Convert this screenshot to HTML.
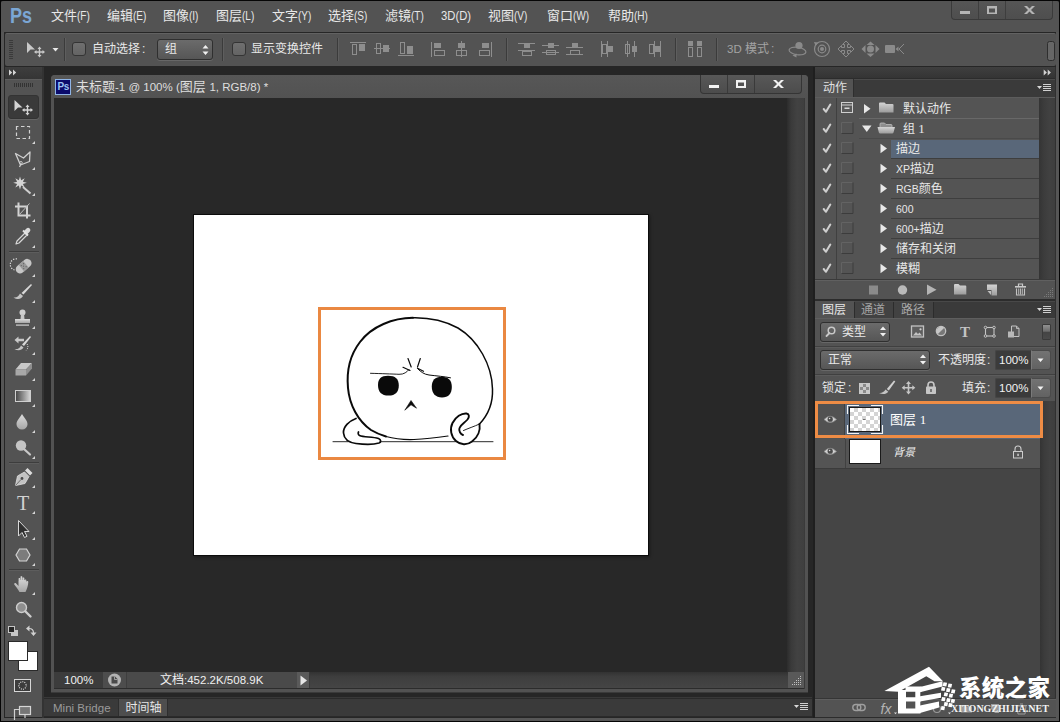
<!DOCTYPE html>
<html lang="zh-CN">
<head>
<meta charset="utf-8">
<title>未标题-1 @ 100% (图层 1, RGB/8) * - Photoshop</title>
<style>
*{box-sizing:border-box;margin:0;padding:0}
html,body{width:1060px;height:722px;overflow:hidden;background:#000}
body{font-family:"Liberation Sans","Noto Sans CJK SC",sans-serif;font-size:13px;color:#e8e8e8;position:relative}
.a{position:absolute}
.t{position:absolute;white-space:nowrap;line-height:16px;height:16px;font-size:13px}
.l{font-size:11.5px}
.m{display:inline-block;font-size:12.5px;transform:scaleX(.8);transform-origin:0 50%}
.k{font-size:10.5px}
svg{position:absolute;left:0;top:0;overflow:visible}
#app{position:absolute;left:0;top:0;width:1060px;height:722px;background:#262626;overflow:hidden}
.sep{position:absolute;width:2px;top:38px;height:23px;border-left:1px solid #3b3b3b;border-right:1px solid #5e5e5e}
.cb{position:absolute;width:14px;height:14px;top:42px;border:1px solid #343434;border-radius:3px;background:linear-gradient(#6f6f6f,#646464)}
.sel{position:absolute;border:1px solid #2f2f2f;border-radius:3px;background:linear-gradient(#6b6b6b,#565656);box-shadow:0 1px 0 rgba(255,255,255,.12)}
.num{position:absolute;background:#3b3b3b;border:1px solid #454545;border-right:0;border-radius:2px 0 0 2px}
.dd{position:absolute;border:1px solid #4a4a4a;border-left-color:#7a7a7a;border-radius:0 3px 3px 0;background:linear-gradient(#737373,#626262)}
.row{position:absolute;left:815px;width:224px;height:20px}
.rl{position:absolute;height:1px;background:#3e3e3e}
</style>
</head>
<body>
<div id="app">

<!-- ===== MENU BAR ===== -->
<div class="a" style="left:1px;top:1px;width:1058px;height:720px;background:#565656;border-radius:3px 3px 0 0"></div><div class="a" style="left:4px;top:32px;width:1052px;height:686px;background:#262626"></div><div class="a" style="left:1px;top:1px;width:1058px;height:31px;background:#535353;border-radius:3px 3px 0 0"></div>
<div class="t" style="left:10px;top:4px;height:24px;line-height:24px;font-size:22px;font-weight:bold;color:#7ba6d4;letter-spacing:0;transform:scaleX(.82);transform-origin:0 0">Ps</div>
<div class="t" style="left:51px;top:8px">文件<span class="m">(F)</span></div>
<div class="t" style="left:107px;top:8px">编辑<span class="m">(E)</span></div>
<div class="t" style="left:163px;top:8px">图像<span class="m">(I)</span></div>
<div class="t" style="left:216px;top:8px">图层<span class="m">(L)</span></div>
<div class="t" style="left:272px;top:8px">文字<span class="m">(Y)</span></div>
<div class="t" style="left:328px;top:8px">选择<span class="m">(S)</span></div>
<div class="t" style="left:385px;top:8px">滤镜<span class="m">(T)</span></div>
<div class="t" style="left:441px;top:8px"><span class="m" style="transform:scaleX(.9)">3D(D)</span></div>
<div class="t" style="left:488px;top:8px">视图<span class="m">(V)</span></div>
<div class="t" style="left:547px;top:8px">窗口<span class="m">(W)</span></div>
<div class="t" style="left:608px;top:8px">帮助<span class="m">(H)</span></div>
<!-- app window buttons -->
<div class="a" style="left:951px;top:0;width:102px;height:20px;border:1px solid #3a3a3a;border-top:0;border-radius:0 0 4px 4px;background:linear-gradient(#565656,#4e4e4e)"></div>
<div class="a" style="left:978px;top:0;width:1px;height:19px;background:#3e3e3e"></div>
<div class="a" style="left:1005px;top:0;width:1px;height:19px;background:#3e3e3e"></div>

<!-- ===== OPTIONS BAR ===== -->
<div class="a" style="left:5px;top:33px;width:1051px;height:33px;background:#535353;border-top:1px solid #626262;border-radius:2px"></div>
<div class="sep" style="left:64px"></div>
<div class="cb" style="left:72px"></div>
<div class="t" style="left:92px;top:41px;font-size:12px">自动选择<span style="margin-left:2px">:</span></div>
<div class="sel" style="left:157px;top:39px;width:56px;height:21px"></div>
<div class="t" style="left:165px;top:41px;font-size:12px">组</div>
<div class="sep" style="left:222px"></div>
<div class="cb" style="left:232px"></div>
<div class="t" style="left:251px;top:41px;font-size:12px">显示变换控件</div>
<div class="sep" style="left:337px"></div>
<div class="sep" style="left:506px"></div>
<div class="sep" style="left:675px"></div>
<div class="sep" style="left:716px"></div>
<div class="t" style="left:727px;top:41px;color:#a3a3a3;font-size:12px"><span class="l" style="font-size:11.5px">3D</span> 模式<span style="margin-left:2px">:</span></div>

<!-- ===== TOOLBAR ===== -->
<div class="a" style="left:5px;top:79px;width:37px;height:638px;background:#535353;border-top:1px solid #5e5e5e"></div>
<div class="a" style="left:5px;top:67px;width:37px;height:12px;background:linear-gradient(#3e3e3e,#353535)"></div>
<div class="a" style="left:42px;top:67px;width:2px;height:651px;background:#333"></div>
<div class="a" style="left:8px;top:95px;width:31px;height:24px;border-radius:3px;background:#3a3a3a;border:1px solid #333;box-shadow:0 1px 0 rgba(255,255,255,.1)"></div>
<div class="a" style="left:9px;top:251px;width:30px;height:2px;border-top:1px solid #3d3d3d;border-bottom:1px solid #5d5d5d"></div>
<div class="a" style="left:9px;top:462px;width:30px;height:2px;border-top:1px solid #3d3d3d;border-bottom:1px solid #5d5d5d"></div>
<div class="a" style="left:9px;top:569px;width:30px;height:2px;border-top:1px solid #3d3d3d;border-bottom:1px solid #5d5d5d"></div>
<div class="a" style="left:8px;top:641px;width:20px;height:20px;background:#fff;border:1px solid #2a2a2a;z-index:2"></div>
<div class="a" style="left:18px;top:651px;width:20px;height:20px;background:#fff;border:1px solid #2a2a2a"></div>

<!-- ===== DOCUMENT WINDOW ===== -->
<div class="a" style="left:51px;top:75px;width:757px;height:618px;background:#525252;border-radius:4px 4px 0 0;border-bottom:1px solid #3a3a3a"></div>
<div class="a" style="left:51px;top:75px;width:757px;height:23px;background:linear-gradient(#575757,#525252);border-radius:4px 4px 0 0"></div>
<div class="a" style="left:54px;top:98px;width:734px;height:574px;background:#282828"></div>
<div class="a" style="left:787px;top:98px;width:17px;height:574px;background:linear-gradient(90deg,#2c2c2c,#3a3a3a 25%,#424242 60%,#3f3f3f)"></div><div class="a" style="left:804px;top:98px;width:1px;height:591px;background:#3a3a3a"></div>
<div class="a" style="left:54px;top:672px;width:734px;height:16px;background:linear-gradient(#323232,#3e3e3e 30%,#454545)"></div><div class="a" style="left:54px;top:688px;width:750px;height:1px;background:#2c2c2c"></div>
<div class="a" style="left:788px;top:672px;width:16px;height:16px;background:#595959"></div>
<div class="a" style="left:55px;top:79px;width:16px;height:16px;background:#0b0b6b;border:1px solid #8fb4e6"></div>
<div class="t" style="left:57.5px;top:80px;height:14px;line-height:14px;font-size:10px;font-weight:bold;color:#9cc2f2;letter-spacing:-0.3px">Ps</div>
<div class="t" style="left:76px;top:79px;color:#dedede">未标题<span class="l">-1 @ 100% (</span>图层 <span class="l">1, RGB/8) *</span></div>
<div class="a" style="left:700px;top:75px;width:102px;height:19px;border:1px solid #353535;border-top:0;border-radius:0 0 4px 4px;background:linear-gradient(#585858,#4c4c4c)"></div>
<div class="a" style="left:727px;top:75px;width:1px;height:18px;background:#3a3a3a"></div>
<div class="a" style="left:754px;top:75px;width:1px;height:18px;background:#3a3a3a"></div>
<!-- status bar -->
<div class="a" style="left:54px;top:672px;width:49px;height:16px;background:#3c3c3c"></div>
<div class="t" style="left:64px;top:672px;font-size:11.5px;color:#f0f0f0">100%</div>
<div class="a" style="left:103px;top:672px;width:23px;height:16px;background:#4d4d4d"></div>
<div class="a" style="left:126px;top:672px;width:171px;height:16px;background:#4a4a4a;border-left:1px solid #3e3e3e"></div><div class="a" style="left:297px;top:672px;width:13px;height:16px;background:#5a5a5a;border-right:1px solid #3a3a3a"></div>
<div class="t" style="left:160px;top:672px;font-size:12px;color:#f0f0f0">文档<span class="l">:452.2K/508.9K</span></div>
<!-- paper -->
<div class="a" style="left:194px;top:215px;width:454px;height:340px;background:#fff;box-shadow:0 0 0 1px #0c0c0c,1px 1px 3px 1px rgba(0,0,0,.35)"></div>
<div class="a" style="left:318px;top:307px;width:188px;height:153px;border:3px solid #ea8841"></div>

<!-- ===== BOTTOM TABS ===== -->
<div class="a" style="left:44px;top:697px;width:768px;height:1px;background:#383838"></div><div class="a" style="left:44px;top:698px;width:768px;height:19px;background:#3a3a3a;border-top:1px solid #2a2a2a;border-bottom:1px solid #2a2a2a"></div>
<div class="a" style="left:118px;top:699px;width:50px;height:17px;background:#4e4e4e;border-left:1px solid #2e2e2e;border-right:1px solid #2e2e2e"></div>
<div class="t" style="left:53px;top:700px;font-size:11.5px;color:#9a9a9a">Mini Bridge</div>
<div class="t" style="left:125.5px;top:700px;font-size:12px;color:#e6e6e6">时间轴</div>
<div class="a" style="left:0;top:721px;width:1060px;height:1px;background:#050505"></div>
<div class="a" style="left:0;top:0;width:1px;height:722px;background:#050505"></div>
<div class="a" style="left:0;top:0;width:1060px;height:1px;background:#050505"></div>
<div class="a" style="left:1059px;top:0;width:1px;height:722px;background:#050505"></div>

<!-- ===== RIGHT DOCK ===== -->
<!--DOCK-START-->
<div class="a" style="left:813px;top:67px;width:2px;height:651px;background:#1f1f1f"></div>
<div class="a" style="left:815px;top:67px;width:241px;height:650px;background:#535353"></div>
<!-- collapse header -->
<div class="a" style="left:815px;top:67px;width:241px;height:12px;background:linear-gradient(#3f3f3f,#343434);border-bottom:1px solid #2c2c2c"></div>
<!-- actions tab bar -->
<div class="a" style="left:815px;top:79px;width:241px;height:18px;background:#3a3a3a;border-top:1px solid #4a4a4a"></div>
<div class="a" style="left:815px;top:79px;width:39px;height:19px;background:#535353;border-right:1px solid #2e2e2e"></div>
<div class="t" style="left:823px;top:80px;font-size:12px;color:#e0e0e0">动作</div>
<div class="a" style="left:815px;top:97px;width:241px;height:1px;background:#5c5c5c"></div>
<!-- actions list -->
<div class="a" style="left:815px;top:98px;width:224px;height:181px;background:#545454"></div>
<div class="a" style="left:1039px;top:98px;width:16px;height:181px;background:linear-gradient(90deg,#343434,#3c3c3c 30%,#414141 65%,#3e3e3e)"></div>
<div class="a" style="left:836px;top:98px;width:1px;height:181px;background:#404040"></div>
<div class="a" style="left:891px;top:140px;width:148px;height:18px;background:#596779"></div>
<div class="rl" style="left:859px;top:118px;width:180px;background:#686868"></div>
<div class="rl" style="left:859px;top:138px;width:180px;background:#4a4a4a"></div>
<div class="rl" style="left:891px;top:158px;width:148px"></div>
<div class="rl" style="left:891px;top:178px;width:148px"></div>
<div class="rl" style="left:891px;top:198px;width:148px"></div>
<div class="rl" style="left:891px;top:218px;width:148px"></div>
<div class="rl" style="left:891px;top:238px;width:148px"></div>
<div class="rl" style="left:891px;top:258px;width:148px"></div>
<div class="t" style="left:903px;top:101px;font-size:12px">默认动作</div>
<div class="t" style="left:903px;top:121px;font-size:12px">组 <span class="l" style="font-family:'Liberation Serif',serif;font-size:13px">1</span></div>
<div class="t" style="left:896px;top:141px;font-size:12px">描边</div>
<div class="t" style="left:896px;top:161px;font-size:12px"><span class="k">XP</span>描边</div>
<div class="t" style="left:896px;top:181px;font-size:12px"><span class="k">RGB</span>颜色</div>
<div class="t" style="left:896px;top:201px;font-size:12px"><span class="k">600</span></div>
<div class="t" style="left:896px;top:221px;font-size:12px"><span class="k">600+</span>描边</div>
<div class="t" style="left:896px;top:241px;font-size:12px">储存和关闭</div>
<div class="t" style="left:896px;top:261px;font-size:12px">模糊</div>
<!-- actions footer -->
<div class="a" style="left:815px;top:279px;width:241px;height:1px;background:#3a3a3a"></div>
<div class="a" style="left:815px;top:280px;width:241px;height:19px;background:#535353;border-top:1px solid #606060"></div>
<div class="a" style="left:815px;top:299px;width:241px;height:2px;background:#2c2c2c"></div>
<!-- layers tab bar -->
<div class="a" style="left:815px;top:301px;width:241px;height:17px;background:#3a3a3a;border-top:1px solid #484848"></div>
<div class="a" style="left:815px;top:301px;width:39px;height:18px;background:#535353"></div>
<div class="a" style="left:855px;top:302px;width:78px;height:16px;background:#424242"></div><div class="a" style="left:854px;top:302px;width:1px;height:16px;background:#2c2c2c"></div>
<div class="a" style="left:893px;top:302px;width:1px;height:16px;background:#2c2c2c"></div>
<div class="a" style="left:933px;top:302px;width:1px;height:16px;background:#2c2c2c"></div>
<div class="t" style="left:822px;top:302px;font-size:12px;color:#e6e6e6">图层</div>
<div class="t" style="left:861px;top:302px;font-size:12px;color:#a4a4a4">通道</div>
<div class="t" style="left:901px;top:302px;font-size:12px;color:#a8a8a8">路径</div>
<div class="a" style="left:815px;top:318px;width:241px;height:1px;background:#5e5e5e"></div>
<!-- filter row -->
<div class="sel" style="left:820px;top:322px;width:70px;height:20px"></div>
<div class="t" style="left:842px;top:324px;font-size:12px">类型</div>
<div class="a" style="left:1042px;top:324px;width:9px;height:16px;border:1px solid #3a3a3a;border-radius:1px;background:linear-gradient(#909090 0,#6c6c6c 45%,#444 50%,#4a4a4a 100%)"></div>
<div class="a" style="left:815px;top:346px;width:241px;height:2px;border-top:1px solid #404040;border-bottom:1px solid #5c5c5c"></div>
<!-- blend row -->
<div class="sel" style="left:820px;top:350px;width:110px;height:20px"></div>
<div class="t" style="left:828px;top:352px;font-size:12px">正常</div>
<div class="t" style="left:938px;top:352px;font-size:12px">不透明度<span style="margin-left:1px">:</span></div>
<div class="num" style="left:995px;top:350px;width:36px;height:20px"></div>
<div class="dd" style="left:1031px;top:350px;width:20px;height:20px"></div>
<div class="t" style="left:999px;top:352px;font-size:11.5px;color:#f2f2f2">100%</div>
<div class="a" style="left:815px;top:374px;width:241px;height:2px;border-top:1px solid #404040;border-bottom:1px solid #5c5c5c"></div>
<!-- lock row -->
<div class="t" style="left:822px;top:380px;font-size:12px">锁定<span style="margin-left:2px">:</span></div>
<div class="t" style="left:962px;top:380px;font-size:12px">填充<span style="margin-left:1px">:</span></div>
<div class="num" style="left:995px;top:378px;width:36px;height:20px"></div>
<div class="dd" style="left:1031px;top:378px;width:20px;height:20px"></div>
<div class="t" style="left:999px;top:380px;font-size:11.5px;color:#f2f2f2">100%</div>
<!-- layers list -->
<div class="a" style="left:815px;top:401px;width:225px;height:297px;background:#454545"></div>
<div class="a" style="left:1040px;top:401px;width:15px;height:297px;background:linear-gradient(90deg,#343434,#3c3c3c 30%,#414141 65%,#3e3e3e)"></div><div class="a" style="left:1055px;top:67px;width:1px;height:651px;background:#303030"></div>
<div class="a" style="left:815px;top:401px;width:225px;height:38px;background:#596779"></div>
<div class="a" style="left:815px;top:401px;width:30px;height:38px;background:#525252;border-right:1px solid #404040"></div>
<div class="a" style="left:815px;top:439px;width:225px;height:29px;background:#545454"></div>
<div class="a" style="left:845px;top:439px;width:1px;height:29px;background:#414141"></div>
<div class="a" style="left:815px;top:468px;width:225px;height:1px;background:#3b3b3b"></div>
<!-- layer 1 thumb -->
<div class="a" style="left:849px;top:407px;width:32px;height:25px;border:1px solid #1a1a1a;background-color:#fff;background-image:linear-gradient(45deg,#d4d4d4 25%,transparent 25%,transparent 75%,#d4d4d4 75%),linear-gradient(45deg,#d4d4d4 25%,transparent 25%,transparent 75%,#d4d4d4 75%);background-size:8px 8px;background-position:0 0,4px 4px"></div>
<div class="a" style="left:849px;top:439px;width:32px;height:25px;border:1px solid #1a1a1a;background:#fff"></div>
<div class="t" style="left:890px;top:412px;color:#fff">图层 <span style="font-family:'Liberation Serif',serif;font-size:13px">1</span></div>
<div class="t" style="left:893px;top:444px;font-size:11px;font-style:italic;color:#f0f0f0">背景</div>
<div class="a" style="left:815px;top:401px;width:228px;height:37px;border:3px solid #ee8c45"></div>
<!-- layers footer -->
<div class="a" style="left:815px;top:698px;width:241px;height:1px;background:#353535"></div>
<div class="a" style="left:815px;top:699px;width:241px;height:18px;background:#535353;border-top:1px solid #5e5e5e"></div>
<div class="a" style="left:815px;top:717px;width:241px;height:1px;background:#2c2c2c"></div>
<!--DOCK-END-->

<!-- ===== ICONS ===== -->
<!--ICONS1-START-->
<svg width="1060" height="722" viewBox="0 0 1060 722">
<defs>
<linearGradient id="gi" x1="0" y1="0" x2="0" y2="1"><stop offset="0" stop-color="#d8d8d8"/><stop offset="1" stop-color="#a8a8a8"/></linearGradient>
<linearGradient id="gh" x1="0" y1="0" x2="1" y2="0"><stop offset="0" stop-color="#3c3c3c"/><stop offset="1" stop-color="#e0e0e0"/></linearGradient>
</defs>
<!-- app window buttons -->
<g fill="#b4b4b4">
<rect x="960" y="11" width="10" height="3"/>
<path d="M987 6h10v8h-10zM989 8.500v4h6v-4z" fill-rule="evenodd"/>
<path d="M1024 6h3l2.500 2.600 2.500-2.600h3l-4 4 4 4h-3l-2.500-2.600-2.500 2.600h-3l4-4z"/>
</g>
<!-- doc window buttons -->
<g fill="#f2f2f2">
<rect x="709" y="85" width="10" height="3"/>
<path d="M736 80h10v8h-10zM738 82.500v3.500h6v-3.500z" fill-rule="evenodd"/>
<path d="M773 80h3l2.500 2.600 2.500-2.600h3l-4 4 4 4h-3l-2.500-2.600-2.500 2.600h-3l4-4z"/>
</g>
<!-- options bar grip -->
<g fill="#3a3a3a">
<rect x="9" y="40" width="4" height="1"/><rect x="9" y="42" width="4" height="1"/><rect x="9" y="44" width="4" height="1"/><rect x="9" y="46" width="4" height="1"/><rect x="9" y="48" width="4" height="1"/><rect x="9" y="50" width="4" height="1"/><rect x="9" y="52" width="4" height="1"/><rect x="9" y="54" width="4" height="1"/><rect x="9" y="56" width="4" height="1"/><rect x="9" y="58" width="4" height="1"/>
</g>
<!-- options bar right grip -->
<rect x="1047.500" y="41.500" width="7" height="19" rx="2" fill="#666" stroke="#2e2e2e"/>
<!-- move tool (options) -->
<g id="mv">
<path d="M27 42l8 7.500h-4.500l-3.500 3.500z" fill="#c9c9c9"/>
<path d="M39.500 46.500l2 2.500h-1.300v2.300h2.300v-1.300l2.500 2-2.500 2v-1.300h-2.300v2.300h1.300l-2 2.500-2-2.500h1.300v-2.300h-2.300v1.300l-2.500-2 2.500-2v1.300h2.300v-2.300h-1.300z" fill="#c9c9c9"/>
</g>
<path d="M52.500 48h6l-3 3.500z" fill="#e8e8e8"/>
<!-- select arrows -->
<path d="M202.500 48.500l3-3.500 3 3.500zM202.500 51.500l3 3.500 3-3.500z" fill="#f0f0f0"/>
<!-- align icons -->
<g fill="#8e8e8e" stroke="none">
<rect x="350" y="42" width="16" height="1"/><path d="M352 44h5v11h-5zM353 45v9h3v-9z" fill-rule="evenodd"/><rect x="359" y="44" width="6" height="7"/>
<rect x="374" y="48" width="16" height="1"/><path d="M376 43h5v11h-5zM377 44v9h3v-9z" fill-rule="evenodd"/><rect x="383" y="45" width="6" height="7"/>
<rect x="398" y="55" width="16" height="1"/><path d="M400 42h5v12h-5zM401 43v10h3v-10z" fill-rule="evenodd"/><rect x="407" y="46" width="6" height="8"/>
<rect x="431" y="42" width="1" height="15"/><rect x="434" y="43" width="7" height="5"/><path d="M434 50h11v6h-11zM435 51v4h9v-4z" fill-rule="evenodd"/>
<rect x="461" y="41" width="1" height="16"/><rect x="458" y="43" width="7" height="5"/><path d="M456 50h11v6h-11zM457 51v4h9v-4z" fill-rule="evenodd"/>
<rect x="491" y="42" width="1" height="15"/><rect x="482" y="43" width="7" height="5"/><path d="M479 50h11v6h-11zM480 51v4h9v-4z" fill-rule="evenodd"/>
<rect x="518" y="43" width="17" height="1"/><rect x="518" y="50" width="17" height="1"/><rect x="524" y="44" width="6" height="4"/><path d="M522 51h10v5h-10zM523 52v3h8v-3z" fill-rule="evenodd"/>
<rect x="542" y="45" width="17" height="1"/><rect x="542" y="52" width="17" height="1"/><rect x="548" y="43" width="6" height="5"/><path d="M546 50h10v5h-10zM547 51v3h8v-3z" fill-rule="evenodd"/>
<rect x="566" y="47" width="17" height="1"/><rect x="566" y="54" width="17" height="1"/><rect x="572" y="43" width="6" height="4"/><path d="M570 50h10v4h-10zM571 51v3h8v-3z" fill-rule="evenodd"/>
<rect x="601" y="41" width="1" height="16"/><rect x="607" y="41" width="1" height="16"/><path d="M602 44h5v10h-5zM603 45v8h3v-8z" fill-rule="evenodd"/><rect x="608" y="46" width="5" height="6"/>
<rect x="627" y="41" width="1" height="16"/><rect x="634" y="41" width="1" height="16"/><path d="M625 44h5v10h-5zM626 45v8h3v-8z" fill-rule="evenodd"/><rect x="632" y="46" width="5" height="6"/>
<rect x="654" y="41" width="1" height="16"/><rect x="660" y="41" width="1" height="16"/><path d="M649 44h5v10h-5zM650 45v8h3v-8z" fill-rule="evenodd"/><rect x="655" y="46" width="5" height="6"/>
<rect x="688" y="41" width="5" height="5"/><rect x="697" y="41" width="5" height="5"/><path d="M688 47h5v10h-5zM689 48v8h3v-8z" fill-rule="evenodd"/><path d="M697 47h5v10h-5zM698 48v8h3v-8z" fill-rule="evenodd"/>
</g>
<!-- 3D mode icons -->
<g fill="none" stroke="#8a8a8a" stroke-width="1.200">
<ellipse cx="797.500" cy="51" rx="8.500" ry="3.800" transform="rotate(8 797.500 51)"/>
<circle cx="799" cy="45.500" r="3.600" fill="#8a8a8a" stroke="none"/>
<path d="M792.500 55.500l4-2v4z" fill="#8a8a8a" stroke="none"/>
<circle cx="822" cy="49" r="7.500"/>
<circle cx="822" cy="49" r="3.800"/>
<circle cx="822" cy="49" r="2" fill="#8a8a8a" stroke="none"/>
<path d="M814 42l4.500 .5-3 3.500z" fill="#8a8a8a" stroke="none"/>
<path d="M846 41L849.500 44.500H847.500V47.500H850.500V45.500L854 49L850.500 52.500V50.500H847.500V53.500H849.500L846 57L842.500 53.500H844.500V50.500H841.500V52.500L838 49L841.500 45.500V47.500H844.500V44.500H842.500Z" stroke-width="1"/>
</g>
<g fill="#8a8a8a">
<circle cx="870.500" cy="49" r="3.500"/>
<path d="M870.500 41.500l4 3.500h-8zM870.500 57l-4-3.500h8zM861.500 49l4-4v8zM879.500 49l-4 4v-8z"/>
<rect x="885" y="45" width="10" height="8" rx="1"/>
<path d="M895.500 49l3-2.500v5z"/>
<path d="M904 44l-5 5 5 5" fill="none" stroke="#8a8a8a" stroke-width="1"/>
</g>
</svg>
<!--ICONS1-END-->
<!--ICONS2-START-->
<svg width="1060" height="722" viewBox="0 0 1060 722">
<defs><linearGradient id="tg" x1="0" y1="0" x2="0" y2="1"><stop offset="0" stop-color="#dcdcdc"/><stop offset="1" stop-color="#a6a6a6"/></linearGradient><linearGradient id="tgr" x1="0" y1="0" x2="1" y2="0"><stop offset="0" stop-color="#444"/><stop offset="1" stop-color="#d8d8d8"/></linearGradient></defs>
<path d="M9 69.500l3.200 3-3.200 3zM13 69.500l3.200 3-3.200 3z" fill="#d4d4d4"/>
<path d="M1043.700 69.500l3.200 3-3.200 3zM1047.700 69.500l3.200 3-3.200 3z" fill="#d4d4d4"/>
<g fill="#333"><rect x="14" y="83" width="1" height="4"/><rect x="16" y="83" width="1" height="4"/><rect x="18" y="83" width="1" height="4"/><rect x="20" y="83" width="1" height="4"/><rect x="22" y="83" width="1" height="4"/><rect x="24" y="83" width="1" height="4"/><rect x="26" y="83" width="1" height="4"/><rect x="28" y="83" width="1" height="4"/><rect x="30" y="83" width="1" height="4"/><rect x="32" y="83" width="1" height="4"/></g>
<g fill="#d6d6d6"><path d="M35 141.0v3h-3z"/><path d="M35 167.0v3h-3z"/><path d="M35 193.0v3h-3z"/><path d="M35 219.0v3h-3z"/><path d="M35 245.0v3h-3z"/><path d="M35 274.0v3h-3z"/><path d="M35 300.0v3h-3z"/><path d="M35 326.0v3h-3z"/><path d="M35 352.0v3h-3z"/><path d="M35 378.0v3h-3z"/><path d="M35 404.0v3h-3z"/><path d="M35 430.0v3h-3z"/><path d="M35 456.0v3h-3z"/><path d="M35 485.0v3h-3z"/><path d="M35 511.0v3h-3z"/><path d="M35 537.0v3h-3z"/><path d="M35 563.0v3h-3z"/><path d="M35 592.0v3h-3z"/></g>
<path d="M14.500 100l8 7.500h-4.500l-3.500 3.500z" fill="#d4d4d4"/>
<path d="M27.500 104.500l2 2.500h-1.300v2.300h2.300v-1.300l2.500 2-2.500 2v-1.300h-2.300v2.300h1.300l-2 2.500-2-2.500h1.300v-2.300h-2.300v1.300l-2.500-2 2.500-2v1.300h2.300v-2.300h-1.300z" fill="#d4d4d4"/>
<rect x="16.500" y="126.500" width="13" height="12" fill="none" stroke="#d2d2d2" stroke-width="1.200" stroke-dasharray="3.500 2.500" stroke-dashoffset="1.500"/>
<path d="M15.500 153.500l8 4.500 6.500-6-.5 9.500-9 3.500zM21 164l-1.500 3" fill="none" stroke="#cfcfcf" stroke-width="1.300" stroke-linejoin="round"/><circle cx="21" cy="162.800" r="1.300" fill="none" stroke="#cfcfcf" stroke-width=".9"/>
<path d="M23 187l7.500 6.500" stroke="#cfcfcf" stroke-width="2" fill="none"/><path d="M20 176.500l1.200 3.800 3.500-2-1.800 3.500 3.900 1-3.900 1.200 1.700 3.500-3.400-1.900-1.200 3.900-1.200-3.900-3.500 1.900 1.800-3.500-3.900-1.200 3.900-1-1.800-3.500 3.500 2z" fill="#d4d4d4"/>
<path d="M18.500 202.500v13h12M15 206.500h12v12" fill="none" stroke="#d2d2d2" stroke-width="2"/><path d="M19.500 214.500l10-11" stroke="#bdbdbd" stroke-width="1" fill="none"/>
<path d="M16 244l1-3 8-8 2 2-8 8z" fill="none" stroke="#d6d6d6" stroke-width="1.200" stroke-linejoin="round"/><path d="M24 231l2.500-2.500a2.200 2.200 0 0 1 3.200 3.200L27 234.500z" fill="#dadada"/><path d="M23 230.500l5 5" stroke="#e2e2e2" stroke-width="1.800"/>
<g transform="rotate(-40 23.500 266)"><rect x="14.500" y="262" width="18" height="8.500" rx="4.200" fill="#c6c6c6"/><rect x="20.500" y="262" width="6" height="8.500" fill="#9a9a9a"/><g fill="#606060"><circle cx="22" cy="264.300" r=".6"/><circle cx="25" cy="264.300" r=".6"/><circle cx="22" cy="268.200" r=".6"/><circle cx="25" cy="268.200" r=".6"/><circle cx="23.500" cy="266.200" r=".6"/></g></g><path d="M14.500 270a5.500 5.500 0 0 1 3-11" fill="none" stroke="#e0e0e0" stroke-width="1.200" stroke-dasharray="1.200 1.400"/>
<path d="M31 284l1 1-8.500 9.500-2-1.500z" fill="#d8d8d8"/><path d="M13.500 297.500c3 .5 5-1 6.500-4l3 2.500c-2 3.500-5.500 4-9.500 1.500z" fill="#c4c4c4"/>
<circle cx="22.500" cy="312.500" r="3" fill="#d0d0d0"/><path d="M21 314h3l.5 5h-4z" fill="#c8c8c8"/><rect x="15" y="319" width="15" height="4" fill="url(#tg)"/><rect x="16" y="324.500" width="13" height="1.200" fill="#d0d0d0"/>
<path d="M30 336l1 1-7 9-2-1.500z" fill="#d8d8d8"/><path d="M14.500 349c3 .5 5-.5 6.500-3.500l2.500 2c-2 3-5.500 3.500-9 1.500z" fill="#c4c4c4"/><path d="M14.500 340l4-3.500v2.300h5.500v2.400h-5.500v2.300z" fill="#c8c8c8"/><path d="M27 344c1.500 2 1 4.500-.8 6.500" fill="none" stroke="#dcdcdc" stroke-width="1" stroke-dasharray="1 1.200"/>
<path d="M21 363h11l-6 6.500h-10.500z" fill="#c8c8c8"/><path d="M15.500 369.500h10.500v6h-10.500z" fill="#a8a8a8"/><path d="M26 369.500l6-6.500v5.500l-6 7z" fill="#8e8e8e"/>
<rect x="15.500" y="390.500" width="15" height="11" fill="url(#tgr)" stroke="#cfcfcf" stroke-width="1"/>
<path d="M22 414c1.800 3.500 5.500 6.500 5.500 10.200a5.500 5.200 0 0 1-11 0c0-3.700 3.700-6.700 5.500-10.200z" fill="url(#tg)"/>
<circle cx="21" cy="445.500" r="5.200" fill="#c4c4c4"/><path d="M24.500 449.500l5.500 5" stroke="#c8c8c8" stroke-width="2.200" stroke-linecap="round"/>
<path d="M15.500 485.500l2-9.500 7-4 4.500 4.500-4 7z" fill="#c2c2c2" stroke="#e0e0e0" stroke-width=".8" stroke-linejoin="round"/><path d="M25 470.500l2.500-2.500 5 5-2.500 2.500z" fill="#dcdcdc"/><circle cx="22" cy="478.500" r="1.400" fill="#4a4a4a"/><path d="M15.500 485.500l5.500-6" stroke="#5a5a5a" stroke-width=".8"/>
<text x="23" y="509.500" text-anchor="middle" font-family="'Liberation Serif',serif" font-size="20" fill="#d2d2d2">T</text>
<path d="M18.500 520.500v15.500l3.500-3.500 2.500 5 2.500-1.200-2.500-4.800h4.500z" fill="#303030" stroke="#d8d8d8" stroke-width="1" stroke-linejoin="round"/>
<path d="M16 555l3.500-6h7l3.500 6-3.500 6h-7z" fill="#7c7c7c" stroke="#d4d4d4" stroke-width="1.200"/>
<path d="M19.500 592c-1.500-2.500-3.500-5.500-5.200-7.500-.6-1 .6-2 1.600-1.200l2.600 2.800v-7c0-1.300 1.900-1.300 1.900 0v-1.800c0-1.400 2-1.400 2 0v1.300c0-1.400 2-1.400 2 0v2c0-1.300 1.900-1.300 1.900 0v1.200c.3-1.300 2.100-1.200 2 .3-.2 4-1.300 7-2.800 9.900z" fill="url(#tg)"/><path d="M18.500 581v-2.500M20.400 580v-3M22.400 580v-3M24.400 580v-2.200M26.300 581v-1.500" stroke="#777" stroke-width=".5"/>
<circle cx="21.500" cy="607.500" r="5" fill="#8f8f8f" stroke="#cdcdcd" stroke-width="1.400"/><path d="M25.500 611.500l5 5" stroke="#cdcdcd" stroke-width="2.400" stroke-linecap="round"/>
<rect x="11.500" y="630.500" width="6" height="5" fill="#c6c6c6" stroke="#c6c6c6"/><rect x="8.500" y="626.500" width="6" height="6" fill="#262626" stroke="#c4c4c4"/>
<path d="M29 628.500c3 0 4.500 1.500 4.500 4.500" fill="none" stroke="#d0d0d0" stroke-width="1.200"/><path d="M26 628.500l3.500-3v6zM33.500 636l-3-3.500h6z" fill="#d0d0d0"/>
<rect x="14.500" y="679.500" width="16" height="12" fill="#3c3c3c" stroke="#d6d6d6"/><circle cx="22.500" cy="685.500" r="3.700" fill="none" stroke="#e2e2e2" stroke-width="1.100" stroke-dasharray="1 1.100"/>
<path d="M14.500 720v-10.500h5" fill="none" stroke="#cfcfcf" stroke-width="1.200"/><rect x="19.500" y="706.500" width="11" height="8" fill="#767676" stroke="#d6d6d6" stroke-width="1.200"/><path d="M25 715v3" stroke="#d0d0d0" stroke-width="1.200"/>
</svg>
<!--ICONS2-END-->
<!--ICONS3-START-->
<svg width="1060" height="722" viewBox="0 0 1060 722">
<defs><linearGradient id="dg" x1="0" y1="0" x2="0" y2="1"><stop offset="0" stop-color="#d4d4d4"/><stop offset="1" stop-color="#9c9c9c"/></linearGradient></defs>
<path d="M1037 86h5l-2.500 3z" fill="#d8d8d8"/><rect x="1043" y="84" width="8" height="1" fill="#d0d0d0"/><rect x="1043" y="86" width="8" height="1" fill="#d0d0d0"/><rect x="1043" y="88" width="8" height="1" fill="#d0d0d0"/><rect x="1043" y="90" width="8" height="1" fill="#d0d0d0"/>
<path d="M1037 308h5l-2.500 3z" fill="#d8d8d8"/><rect x="1043" y="306" width="8" height="1" fill="#d0d0d0"/><rect x="1043" y="308" width="8" height="1" fill="#d0d0d0"/><rect x="1043" y="310" width="8" height="1" fill="#d0d0d0"/><rect x="1043" y="312" width="8" height="1" fill="#d0d0d0"/>
<path d="M794 705h5l-2.500 3z" fill="#d8d8d8"/><rect x="800" y="703" width="8" height="1" fill="#d0d0d0"/><rect x="800" y="705" width="8" height="1" fill="#d0d0d0"/><rect x="800" y="707" width="8" height="1" fill="#d0d0d0"/><rect x="800" y="709" width="8" height="1" fill="#d0d0d0"/>
<path d="M823.700 109l2.300 2.800 4.300-7.300" fill="none" stroke="#cfcfcf" stroke-width="2" stroke-linecap="round" stroke-linejoin="round"/>
<path d="M823.700 129l2.300 2.800 4.300-7.300" fill="none" stroke="#cfcfcf" stroke-width="2" stroke-linecap="round" stroke-linejoin="round"/>
<path d="M823.700 149l2.300 2.800 4.300-7.300" fill="none" stroke="#cfcfcf" stroke-width="2" stroke-linecap="round" stroke-linejoin="round"/>
<path d="M823.700 169l2.300 2.800 4.300-7.300" fill="none" stroke="#cfcfcf" stroke-width="2" stroke-linecap="round" stroke-linejoin="round"/>
<path d="M823.700 189l2.300 2.800 4.300-7.300" fill="none" stroke="#cfcfcf" stroke-width="2" stroke-linecap="round" stroke-linejoin="round"/>
<path d="M823.700 209l2.300 2.800 4.300-7.300" fill="none" stroke="#cfcfcf" stroke-width="2" stroke-linecap="round" stroke-linejoin="round"/>
<path d="M823.700 229l2.300 2.800 4.300-7.300" fill="none" stroke="#cfcfcf" stroke-width="2" stroke-linecap="round" stroke-linejoin="round"/>
<path d="M823.700 249l2.300 2.800 4.300-7.300" fill="none" stroke="#cfcfcf" stroke-width="2" stroke-linecap="round" stroke-linejoin="round"/>
<path d="M823.700 269l2.300 2.800 4.300-7.300" fill="none" stroke="#cfcfcf" stroke-width="2" stroke-linecap="round" stroke-linejoin="round"/>
<rect x="841.500" y="102.500" width="11" height="10" fill="#5a5a5a" stroke="#cfcfcf"/><rect x="842" y="104.500" width="10" height="1" fill="#cfcfcf"/><rect x="844.500" y="107.500" width="5" height="1.500" fill="#d8d8d8"/>
<path d="M841.500 133.5v-11h11" fill="none" stroke="#636363"/><path d="M841.500 133.5h11.500v-11" fill="none" stroke="#3c3c3c"/>
<path d="M841.500 153.5v-11h11" fill="none" stroke="#636363"/><path d="M841.500 153.5h11.500v-11" fill="none" stroke="#3c3c3c"/>
<path d="M841.500 173.5v-11h11" fill="none" stroke="#636363"/><path d="M841.500 173.5h11.500v-11" fill="none" stroke="#3c3c3c"/>
<path d="M841.500 193.5v-11h11" fill="none" stroke="#636363"/><path d="M841.500 193.5h11.500v-11" fill="none" stroke="#3c3c3c"/>
<path d="M841.500 213.5v-11h11" fill="none" stroke="#636363"/><path d="M841.500 213.5h11.500v-11" fill="none" stroke="#3c3c3c"/>
<path d="M841.500 233.5v-11h11" fill="none" stroke="#636363"/><path d="M841.500 233.5h11.500v-11" fill="none" stroke="#3c3c3c"/>
<path d="M841.500 253.5v-11h11" fill="none" stroke="#636363"/><path d="M841.500 253.5h11.500v-11" fill="none" stroke="#3c3c3c"/>
<path d="M841.500 273.5v-11h11" fill="none" stroke="#636363"/><path d="M841.500 273.5h11.500v-11" fill="none" stroke="#3c3c3c"/>
<path d="M864 104l6.500 4.700-6.500 4.700z" fill="#e8e8e8"/>
<path d="M862 125.500h9.500l-4.700 6.500z" fill="#e8e8e8"/>
<path d="M880.500 143.8l6.500 4.700-6.500 4.700z" fill="#e8e8e8"/>
<path d="M880.500 163.8l6.500 4.700-6.500 4.700z" fill="#e8e8e8"/>
<path d="M880.500 183.8l6.500 4.700-6.500 4.700z" fill="#e8e8e8"/>
<path d="M880.500 203.8l6.500 4.700-6.500 4.700z" fill="#e8e8e8"/>
<path d="M880.500 223.8l6.500 4.700-6.500 4.700z" fill="#e8e8e8"/>
<path d="M880.500 243.8l6.500 4.700-6.500 4.700z" fill="#e8e8e8"/>
<path d="M880.500 263.8l6.500 4.700-6.500 4.700z" fill="#e8e8e8"/>
<path d="M879 103.500q0-1 1-1h4.500l1.500 1.500h6.500q1 0 1 1v7.500h-14.500z" fill="url(#dg)"/>
<path d="M880 128v-4q0-1 1-1h3.500l1.500 1.500h5q1 0 1 1v2.500z" fill="#8e8e8e" stroke="#bdbdbd" stroke-width=".8"/><path d="M877.500 127h17.500l-1.500 5.500q-.3 1-1.300 1h-12q-1 0-1.300-1z" fill="url(#dg)"/>
<rect x="869" y="285.500" width="9" height="9" fill="#8b8b8b"/>
<circle cx="902.500" cy="290" r="4.700" fill="#b9b9b9"/>
<path d="M927 284.500l9.500 5.200-9.500 5.200z" fill="#b4b4b4"/>
<path d="M954 285q0-1 1-1h3.500l1.500 1.500h5.300q1 0 1 1v8h-12.300z" fill="url(#dg)"/>
<path d="M987 284.500h10v11h-5.500v-5.500h-4.500z" fill="url(#dg)"/><path d="M987.500 291l3.500 4v-4z" fill="#c0c0c0"/>
<path d="M1015 286h11v1.600h-11z" fill="#cacaca"/><path d="M1018.500 286v-2h4v2" fill="none" stroke="#cacaca" stroke-width="1.200"/><path d="M1016.500 288.500v6.500h8v-6.500" fill="none" stroke="#c2c2c2" stroke-width="1.100"/><path d="M1018.700 288.500v6M1020.500 288.500v6M1022.300 288.500v6" stroke="#c2c2c2" stroke-width=".9"/>
<g fill="#7a7a7a"><rect x="1052" y="288" width="1" height="1"/><rect x="1050" y="290" width="1" height="1"/><rect x="1052" y="290" width="1" height="1"/><rect x="1048" y="292" width="1" height="1"/><rect x="1050" y="292" width="1" height="1"/><rect x="1052" y="292" width="1" height="1"/><rect x="1046" y="294" width="1" height="1"/><rect x="1048" y="294" width="1" height="1"/><rect x="1050" y="294" width="1" height="1"/><rect x="1052" y="294" width="1" height="1"/><rect x="1044" y="296" width="1" height="1"/><rect x="1046" y="296" width="1" height="1"/><rect x="1048" y="296" width="1" height="1"/><rect x="1050" y="296" width="1" height="1"/><rect x="1052" y="296" width="1" height="1"/></g>
<g fill="#c0c0c0"><rect x="800" y="676" width="1" height="1"/><rect x="798" y="678" width="1" height="1"/><rect x="800" y="678" width="1" height="1"/><rect x="796" y="680" width="1" height="1"/><rect x="798" y="680" width="1" height="1"/><rect x="800" y="680" width="1" height="1"/><rect x="794" y="682" width="1" height="1"/><rect x="796" y="682" width="1" height="1"/><rect x="798" y="682" width="1" height="1"/><rect x="800" y="682" width="1" height="1"/><rect x="792" y="684" width="1" height="1"/><rect x="794" y="684" width="1" height="1"/><rect x="796" y="684" width="1" height="1"/><rect x="798" y="684" width="1" height="1"/><rect x="800" y="684" width="1" height="1"/></g>
<circle cx="831.500" cy="330.500" r="3.300" fill="none" stroke="#c8c8c8" stroke-width="1.500"/><path d="M829.500 333l-3 3" stroke="#c8c8c8" stroke-width="1.800" stroke-linecap="round"/>
<path d="M880 330l3-3.500 3 3.500zM880 333l3 3.500 3-3.500z" fill="#f0f0f0"/>
<path d="M920 358l3-3.500 3 3.500zM920 361l3 3.500 3-3.500z" fill="#f0f0f0"/>
<path d="M1037.500 358.500h6l-3 3.500zM1037.500 386.500h6l-3 3.500z" fill="#f4f4f4"/>
<rect x="911.500" y="326" width="12" height="11" fill="#5e5e5e" stroke="#c2c2c2" stroke-width="1.300"/><path d="M913 335.500l3-3.500 2 2 1.500-1.500 2.500 3z" fill="#c2c2c2"/><circle cx="920.500" cy="329.300" r="1.100" fill="#d0d0d0"/>
<circle cx="941" cy="331" r="4.700" fill="#777" stroke="#c0c0c0" stroke-width="1.300"/><path d="M937.700 334.300a4.700 4.700 0 0 1 6.600-6.600z" fill="#c6c6c6"/>
<text x="965" y="337" text-anchor="middle" font-family="'Liberation Serif',serif" font-weight="bold" font-size="15" fill="#c4c4c4">T</text>
<rect x="985.500" y="327.500" width="8.500" height="8.500" fill="none" stroke="#c4c4c4" stroke-width="1.100"/><g fill="#555" stroke="#c8c8c8" stroke-width=".9"><circle cx="985.500" cy="327.500" r="1.300"/><circle cx="994" cy="327.500" r="1.300"/><circle cx="985.500" cy="336" r="1.300"/><circle cx="994" cy="336" r="1.300"/></g>
<path d="M1011.500 326h5l2.500 2.500v8h-7.500z" fill="#5a5a5a" stroke="#c2c2c2" stroke-width="1"/><path d="M1016.500 326v2.500h2.500" fill="none" stroke="#c2c2c2" stroke-width=".9"/><rect x="1008" y="331.500" width="6" height="6" fill="#b8b8b8"/>
<rect x="859" y="383" width="11" height="11" fill="#8a8a8a"/><g fill="#c8c8c8"><rect x="859" y="383" width="1" height="11"/><rect x="869" y="383" width="1" height="11"/><rect x="859" y="383" width="11" height="1"/><rect x="859" y="393" width="11" height="1"/><rect x="860" y="384" width="3" height="3"/><rect x="866" y="384" width="3" height="3"/><rect x="863" y="387" width="3" height="3"/><rect x="860" y="390" width="3" height="3"/><rect x="866" y="390" width="3" height="3"/></g>
<path d="M894 380.500l1.300 1-6.500 9-2-1.500z" fill="#d0d0d0"/><path d="M879 393c3 .3 5-1 6.500-3.500l2.800 2.200c-2.200 2.800-5.800 3-9.300 1.300z" fill="#c4c4c4"/>
<path d="M908.500 381l2.500 3h-1.700v3h3v-1.700l3 2.500-3 2.500v-1.700h-3v3h1.700l-2.500 3-2.500-3h1.700v-3h-3v1.700l-3-2.500 3-2.500v1.700h3v-3h-1.700z" fill="#c6c6c6"/>
<path d="M928 387v-2a3 3 0 0 1 6 0v2" fill="none" stroke="#c8c8c8" stroke-width="1.600"/><rect x="926" y="386.500" width="10" height="7.500" rx=".8" fill="#c6c6c6"/><rect x="930.300" y="389" width="1.400" height="3" fill="#555"/>
<path d="M824 419.5q6-6.500 12.500 0q-6.500 6-12.500 0z" fill="#d0d0d0" stroke="#8a8a8a" stroke-width=".8"/><circle cx="830.200" cy="419.2" r="2.600" fill="#4a4a4a"/><circle cx="829.600" cy="418.5" r=".8" fill="#d8d8d8"/>
<path d="M824 451.5q6-6.500 12.500 0q-6.500 6-12.500 0z" fill="#d0d0d0" stroke="#8a8a8a" stroke-width=".8"/><circle cx="830.200" cy="451.2" r="2.600" fill="#4a4a4a"/><circle cx="829.600" cy="450.5" r=".8" fill="#d8d8d8"/>
<path d="M847.500 414v-8.500h11.500M871 405.500h11.500v8.500M882.500 425v8.500h-11.500M859 433.500h-11.500v-8.500" fill="none" stroke="#f4f4f4" stroke-width="1.100"/>
<path d="M863 419.500h2.500" stroke="#555" stroke-width=".8"/>
<path d="M1015 451.500v-2.500a3 3 0 0 1 6 0v2.500" fill="none" stroke="#cdcdcd" stroke-width="1.100"/><rect x="1013.500" y="451.500" width="9" height="6.500" fill="#555" stroke="#cdcdcd" stroke-width="1"/><rect x="1017.400" y="453.700" width="1.300" height="2.300" fill="#ddd"/>
<rect x="852.800" y="704.500" width="8" height="6" rx="3" fill="none" stroke="#9e9e9e" stroke-width="1.400"/><rect x="857.200" y="704.500" width="8" height="6" rx="3" fill="none" stroke="#9e9e9e" stroke-width="1.400"/>
<text x="880.500" y="714" font-family="'Liberation Sans',sans-serif" font-style="italic" font-size="14" fill="#b4b4b4">fx</text><path d="M894 712.500h3l-1.500 1.800z" fill="#ddd"/>
<circle cx="937" cy="709" r="3.500" fill="none" stroke="#9a9a9a" stroke-width="1.200"/><path d="M948 712.500h3l-1.500 1.800z" fill="#ddd"/>
<path d="M961 705h4l1 1.500h6v6h-11z" fill="#9c9c9c"/><path d="M991 704h8v9h-4l-4-4z" fill="#9c9c9c"/><path d="M1017 706h9l-1 8h-7z" fill="none" stroke="#9c9c9c"/><path d="M1016 705.500h11M1020 704h3" stroke="#9c9c9c"/>
<circle cx="114.500" cy="680" r="6.500" fill="#b4b4b4"/><path d="M111.500 676.500h3.500l2.500 2.500v4.500h-6z" fill="#4a4a4a"/><path d="M114.500 676.500v3h3" fill="none" stroke="#b4b4b4" stroke-width=".8"/>
<path d="M300.500 675.500l6.500 5-6.500 5z" fill="#e6e6e6"/>
</svg>
<!--ICONS3-END-->
<!--ICONS4-START-->
<svg width="1060" height="722" viewBox="0 0 1060 722">
<g fill="none" stroke="#0a0a0a" stroke-linecap="round" stroke-linejoin="round">
<path d="M333 441.700H493" stroke-width="1" stroke="#2a2a2a"/>
<path d="M479.500 424C488 415 493 402 492.500 389C492 365 478 340 458 328C445 321 428 317.500 413 317.800" stroke-width="1.500"/>
<path d="M413 317.800C393 318 372 326 360 342C350 355 346.500 372 348 388C349.500 405 358 421 371 430C376 433 381 435 386 436.500" stroke-width="2"/><path d="M386 436.500C395 439 405 439.800 414 439.500C426 439 438 437.500 448 436" stroke-width="1.200"/>
<path d="M356 418.500C349 421 343 427 343.500 433C344 439 349 442.500 356 443.500C364 444.500 374 444.500 379 443C381.500 442 381 439.500 378.500 438.500C372 436.500 364 437.500 359.500 435.500C358 434.800 358 433 358.500 432" stroke-width="1.700" fill="#fff"/>
<path d="M479.500 424C480.500 430 478 437 472 441.500C467 445.500 460.500 445 456 441C451 436.500 449.500 429 452.500 423C455.500 417 461.500 413 466.500 413.500C469.500 414 469.500 417 467.500 419.500C464.500 423 460.500 424.500 459.500 428C458.500 431 460.500 434 463 435" stroke-width="1.900" fill="#fff"/>
<path d="M463.500 430.500C468 428.500 474 426.500 479.500 424" stroke-width=".9"/>
<path d="M370.500 373.300C381 373.600 392 374 399 374.300C404 374.500 407 372 409 369.500" stroke-width=".9"/>
<path d="M418 369C421 372 424 374.300 429 375C437 376 444 376.500 450.500 377.800" stroke-width="1"/>
<path d="M408 358.500L411.200 367M420.300 358.500L417.500 367M403 367.300L410 370.500M417.500 368.300L423.500 371.300" stroke-width="1.200"/>
</g>
<path d="M404.800 410.200L411 400.500L416.500 408.200L411 404.800Z" fill="#0a0a0a" stroke="#0a0a0a" stroke-width=".6" stroke-linejoin="round"/>
<path d="M378 385C378 379 381 375.800 388 375.800C395.500 375.800 398.800 379 398.800 385.500C398.800 392 395.500 395.600 388.500 395.600C381.500 395.600 378 392 378 385Z" fill="#0a0a0a"/>
<path d="M431.800 386.500C431.800 380.500 435 376.800 441.500 376.800C448.500 376.800 451.800 380.500 451.800 387C451.800 393.500 448.500 397.500 442 397.500C435.500 397.500 431.800 393.500 431.800 386.500Z" fill="#0a0a0a"/>
</svg>
<!--ICONS4-END-->
<!--ICONS5-START-->
<svg width="1060" height="722" viewBox="0 0 1060 722">
<g fill="#fff">
<path d="M884.400 691L929 666.800L943 681.300L934.500 681.300L926.300 676.300L898.500 691.800Z"/>
<path d="M898 690h8v23h-8z"/>
<path d="M905.500 686.500h16v5.200h-16zM905.500 697.300h15v4.200h-15zM898 708.600h22.500v4.800h-22.500z"/>
<path d="M915.300 688h5v24h-5z"/>
<path d="M920 687l22.500-5.700v5.200l-22.500 5.700zM920 696.300l21-3.600v5l-21 3.900zM920 705.600l19-4.200v6l-19 5.500z"/>
<path d="M943.5 682.2l3.600 .6-.8 3.700-3.600-.6z"/>
<path d="M948.5 683.5l3.600 .6-.8 3.700-3.600-.6z"/>
<path d="M941.8 686.8l3.600 .6-.8 3.700-3.600-.6z"/>
<path d="M946.8 688l3.600 .6-.8 3.700-3.600-.6z"/>
<path d="M951.8 689.2l3.600 .6-.8 3.700-3.600-.6z"/>
<path d="M944.5 692.3l3.600 .6-.8 3.700-3.600-.6z"/>
<path d="M949.5 693.5l3.600 .6-.8 3.700-3.600-.6z"/>
<path d="M942 697l3.600 .6-.8 3.700-3.600-.6z"/>
<path d="M947 698l3.600 .6-.8 3.700-3.600-.6z"/>
<path d="M951.5 698.8l3.600 .6-.8 3.700-3.600-.6z"/>
<path d="M944.5 702l3.600 .6-.8 3.700-3.600-.6z"/>
<path d="M949 703l3.600 .6-.8 3.700-3.600-.6z"/>
<path d="M941.5 706l3.600 .6-.8 3.700-3.600-.6z"/>
</g>
</svg>
<!-- watermark -->
<div class="t" style="left:959px;top:677px;height:24px;line-height:24px;font-size:22.5px;font-weight:900;color:#fff;letter-spacing:0.3px;font-family:'Liberation Sans','Noto Sans CJK SC',sans-serif">系统之家</div>
<div class="t" style="left:951px;top:702px;height:14px;line-height:14px;font-size:10px;font-weight:bold;color:#f4f4f4;font-family:'Liberation Serif',serif;letter-spacing:0">XITONGZHIJIA.NET</div>
<!--ICONS5-END-->

</div>
</body>
</html>
